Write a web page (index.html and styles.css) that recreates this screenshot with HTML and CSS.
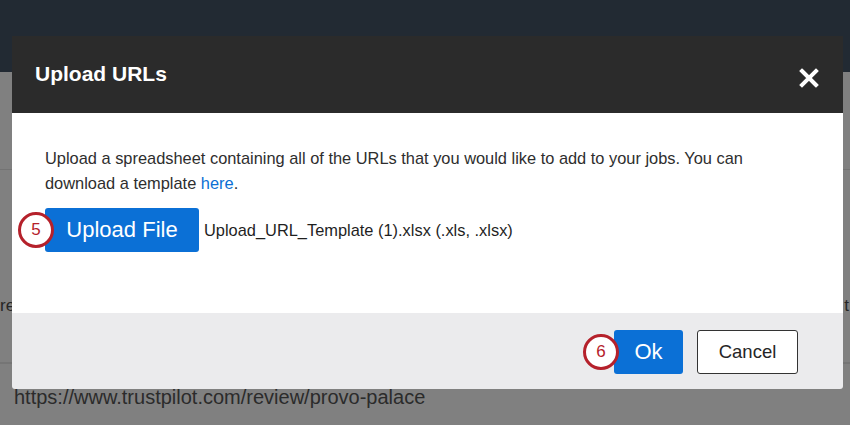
FILE: index.html
```html
<!DOCTYPE html>
<html lang="en">
<head>
    <meta charset="UTF-8">
    <meta name="viewport" content="width=device-width, initial-scale=1.0">
    <title>Upload URLs</title>
    <link rel="stylesheet" href="styles.css">
</head>
<body>
    <!-- Page behind the dialog -->
    <div class="topbar"></div>
    <div class="page">
        <div class="page-divider"></div>
        <div class="page-row">
            <span>re</span>
            <span>t</span>
        </div>
        <div class="page-url">https://www.trustpilot.com/review/provo-palace</div>
    </div>

    <!-- Dialog -->
    <div class="modal">
        <div class="modal-header">
            <div class="modal-title">Upload URLs</div>
            <svg class="close-icon" width="20" height="20" viewBox="0 0 20 20">
                <path d="M3 3 L17 17 M17 3 L3 17" stroke="#fff" stroke-width="4" stroke-linecap="square"/>
            </svg>
        </div>
        <div class="modal-body">
            <p class="intro">Upload a spreadsheet containing all of the URLs that you would like to add to your jobs. You can download a template <a href="#">here</a>.</p>
            <div class="upload-row">
                <button class="btn btn-primary btn-upload">
                    Upload File
                    <span class="step">5</span>
                </button>
                <span class="file-name">Upload_URL_Template (1).xlsx (.xls, .xlsx)</span>
            </div>
        </div>
        <div class="modal-footer">
            <button class="btn btn-primary btn-ok">
                Ok
                <span class="step">6</span>
            </button>
            <button class="btn btn-cancel">Cancel</button>
        </div>
    </div>
</body>
</html>
```

FILE: styles.css
```css
body {
    font-family: "Liberation Sans", Arial, sans-serif;
    margin: 0;
    padding: 0;
    background-color: #808080;
    height: 425px;
    overflow: hidden;
    position: relative;
}

.topbar {
    height: 72px;
    background-color: #222a33;
}

/* Page content under the overlay */
.page {
    color: #262626;
}

.page-divider {
    margin-top: 97px;
    border-top: 1px solid #737373;
}

.page-row {
    display: flex;
    justify-content: space-between;
    align-items: flex-end;
    height: 194px;
    font-size: 17px;
    padding-right: 1px;
    padding-bottom: 46px;
    box-sizing: border-box;
    border-bottom: 2px solid #757575;
}

.page-url {
    padding: 22px 0 0 14px;
    font-size: 20px;
    color: #2b2b2b;
}

/* Dialog */
.modal {
    position: absolute;
    top: 36px;
    left: 12px;
    width: 831px;
    border-radius: 0 0 3px 3px;
}

.modal-header {
    display: flex;
    align-items: center;
    justify-content: space-between;
    height: 77px;
    padding: 0 24px 0 23px;
    background-color: #2b2b2b;
}

.modal-title {
    color: #fff;
    font-size: 21px;
    font-weight: bold;
    margin-top: -2px;
}

.close-icon {
    margin-top: 6px;
}

.modal-body {
    height: 200px;
    box-sizing: border-box;
    padding: 33px 33px 0;
    background-color: #fff;
}

.intro {
    max-width: 740px;
    margin: 0 0 12px;
    font-size: 16.4px;
    line-height: 25px;
    color: #2e2e2e;
}

.intro a {
    color: #0b6fd4;
    text-decoration: none;
}

.upload-row {
    display: flex;
    align-items: center;
    gap: 5px;
}

.file-name {
    font-size: 16.4px;
    color: #1f1f1f;
    margin-top: 1px;
}

.btn {
    position: relative;
    font-family: "Liberation Sans", Arial, sans-serif;
    border-radius: 3px;
    cursor: pointer;
}

.btn-primary {
    background-color: #0b70d6;
    color: #fff;
    border: none;
    font-size: 22px;
}

.btn-upload {
    width: 154px;
    height: 44px;
    padding: 0;
}

.step {
    position: absolute;
    left: -27px;
    top: 50%;
    width: 30px;
    height: 30px;
    margin-top: -18px;
    border: 3px solid #b5212b;
    border-radius: 50%;
    background-color: #fff;
    color: #b5212b;
    font-size: 17px;
    line-height: 30px;
    text-align: center;
}

.btn-ok .step {
    left: -31px;
}

.modal-footer {
    display: flex;
    justify-content: flex-end;
    gap: 14px;
    height: 76px;
    box-sizing: border-box;
    padding: 17px 45px 0 0;
    background-color: #ebebed;
    border-radius: 0 0 3px 3px;
}

.btn-ok {
    width: 69px;
    height: 44px;
    padding: 0;
}

.btn-cancel {
    width: 101px;
    height: 44px;
    padding: 0;
    background-color: #fff;
    color: #262626;
    border: 1.5px solid #333;
    font-size: 18.5px;
}
```
